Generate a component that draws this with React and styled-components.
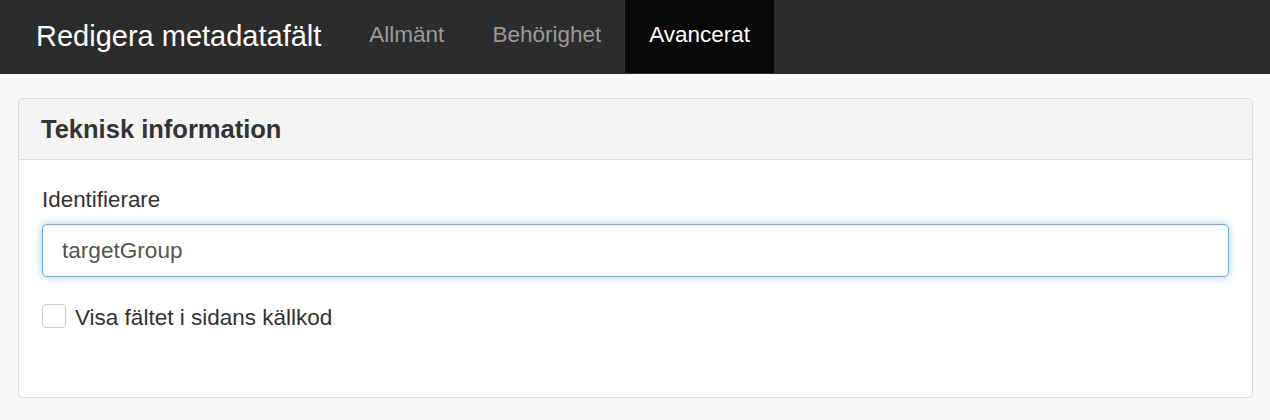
import React, { useEffect, useRef } from "react";
import styled, { createGlobalStyle } from "styled-components";

const Global = createGlobalStyle`
  html, body { margin: 0; padding: 0; }
  body {
    background: #f9f9f9;
    font-family: "Liberation Sans", Arial, Helvetica, sans-serif;
    color: #333;
  }
`;

const NavBar = styled.nav`
  display: flex;
  align-items: stretch;
  height: 74px;
  background: #2c2c2c;
  padding-left: 36px;
`;

const Brand = styled.div`
  display: flex;
  align-items: center;
  color: #fff;
  font-size: 29px;
  margin-right: 24px;
  padding-bottom: 2px;
`;

const Tab = styled.a`
  display: flex;
  align-items: center;
  padding: 0 24px 3px;
  height: 73px;
  box-sizing: border-box;
  font-size: 22.5px;
  color: ${(p) => (p.$active ? "#fff" : "#9a9a9a")};
  background: ${(p) => (p.$active ? "#080808" : "transparent")};
  text-decoration: none;
`;

const Main = styled.main`
  padding: 24px 17px 0 18px;
`;

const Panel = styled.section`
  background: #fff;
  border: 1px solid #dcdcdc;
  border-radius: 5px;
  box-shadow: 0 1px 1px rgba(0, 0, 0, 0.04);
  overflow: hidden;
`;

const PanelHeader = styled.header`
  height: 60px;
  display: flex;
  align-items: center;
  padding: 0 22px;
  background: #f4f4f4;
  border-bottom: 1px solid #dedede;
`;

const PanelTitle = styled.h3`
  margin: 0;
  font-size: 25.5px;
  font-weight: 700;
  color: #333;
`;

const PanelBody = styled.div`
  padding: 27px 23px 66px;
`;

const Label = styled.label`
  display: block;
  font-size: 22.4px;
  line-height: 26px;
  color: #333;
  margin-bottom: 11px;
`;

const Input = styled.input`
  display: block;
  box-sizing: border-box;
  width: 100%;
  height: 53px;
  padding: 0 19px;
  font-family: inherit;
  font-size: 22.6px;
  color: #555;
  border: 1px solid #66afe9;
  border-radius: 5px;
  outline: none;
  box-shadow: inset 0 1px 1px rgba(0, 0, 0, 0.075), 0 0 8px rgba(102, 175, 233, 0.6);
  caret-color: #333;
`;

const CheckRow = styled.label`
  display: flex;
  align-items: center;
  gap: 9px;
  margin-top: 24px;
  font-size: 22.5px;
  line-height: 26px;
  color: #333;
`;

const CheckText = styled.span`
  padding-top: 4px;
`;

const Box = styled.span`
  box-sizing: border-box;
  width: 24px;
  height: 24px;
  border: 1px solid #cfcfcf;
  border-radius: 4px;
  background: #fff;
  flex: none;
`;

export default function App() {
  const inputRef = useRef(null);
  useEffect(() => {
    const el = inputRef.current;
    if (el) {
      el.focus();
      el.setSelectionRange(0, 0);
    }
  }, []);
  return (
    <>
      <Global />
      <NavBar>
        <Brand>Redigera metadatafält</Brand>
        <Tab>Allmänt</Tab>
        <Tab>Behörighet</Tab>
        <Tab $active>Avancerat</Tab>
      </NavBar>
      <Main>
        <Panel>
          <PanelHeader>
            <PanelTitle>Teknisk information</PanelTitle>
          </PanelHeader>
          <PanelBody>
            <Label>Identifierare</Label>
            <Input ref={inputRef} defaultValue="targetGroup" />
            <CheckRow>
              <Box />
              <CheckText>Visa fältet i sidans källkod</CheckText>
            </CheckRow>
          </PanelBody>
        </Panel>
      </Main>
    </>
  );
}
